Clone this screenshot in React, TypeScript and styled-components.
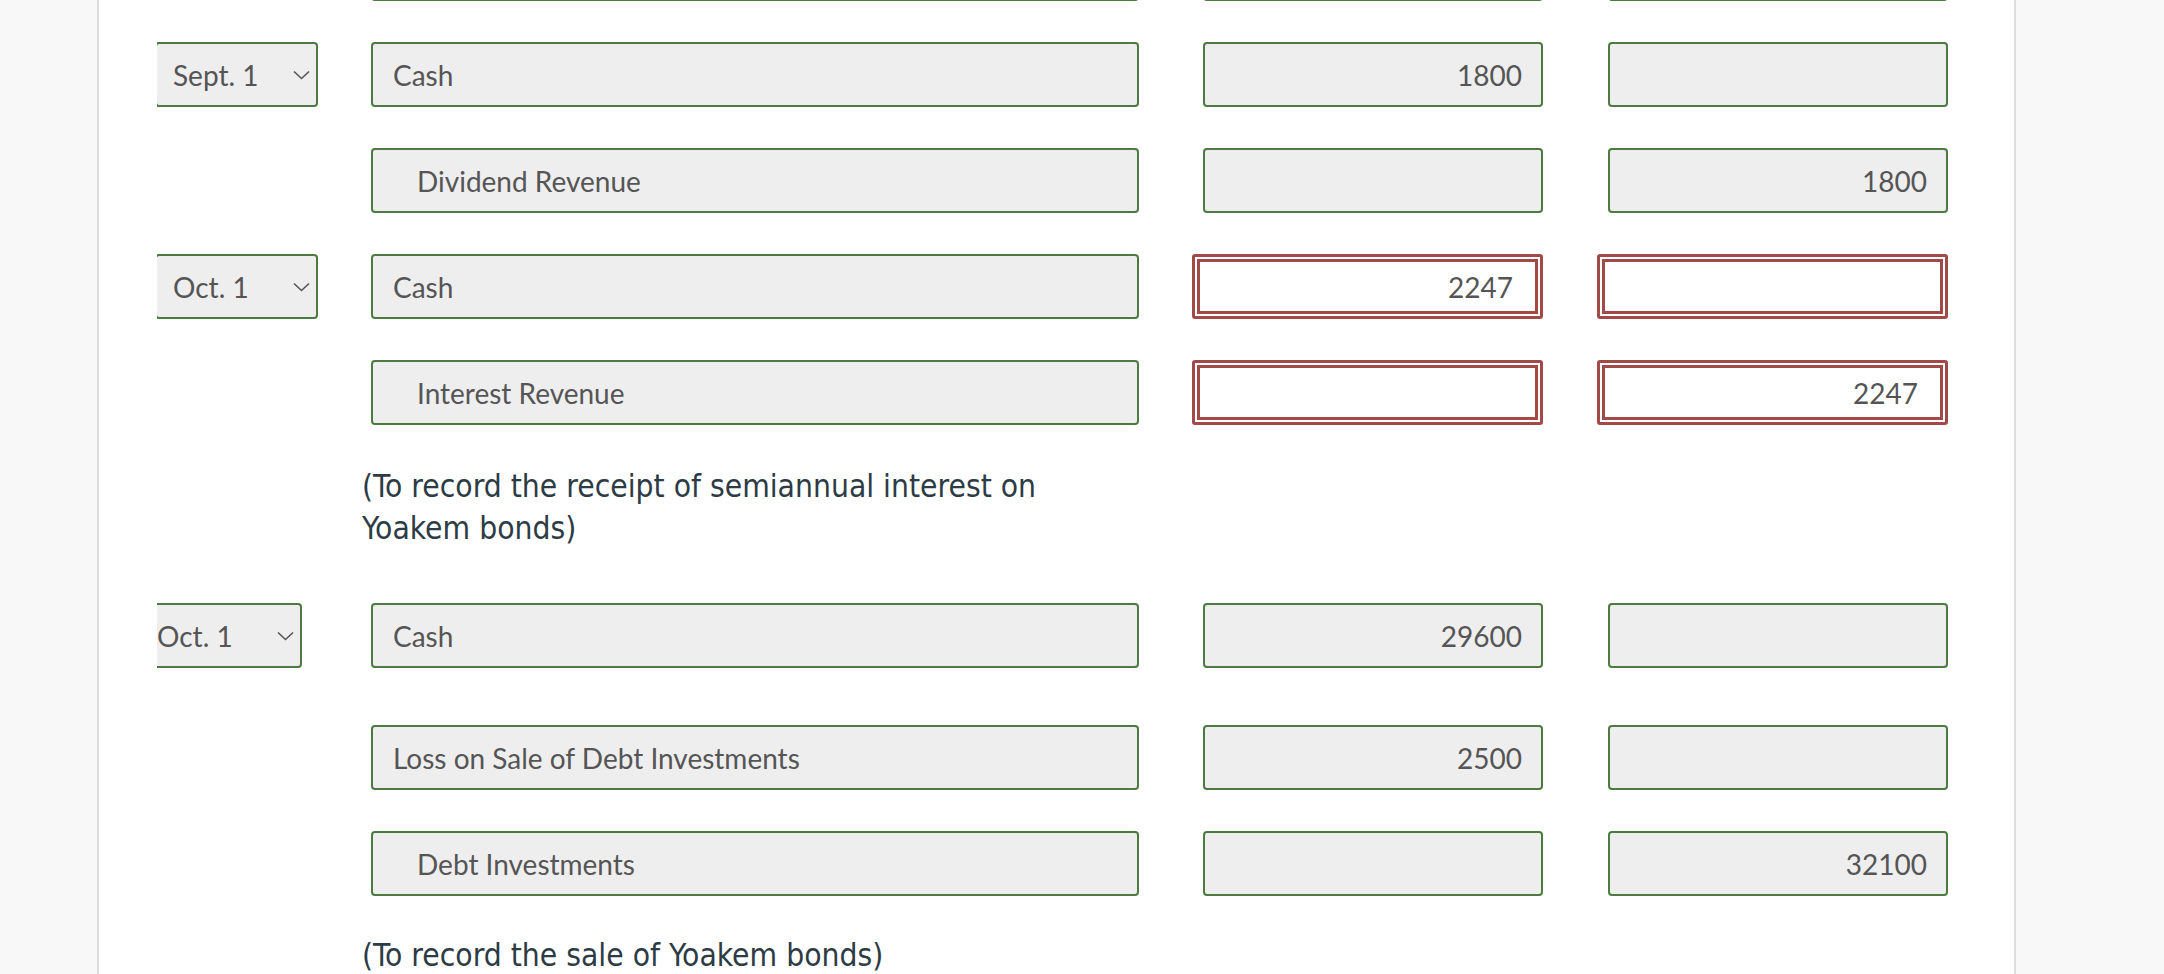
import React from "react";
import styled, { createGlobalStyle } from "styled-components";

const GlobalStyle = createGlobalStyle`
	html, body {
		margin: 0;
		padding: 0;
		background: #f8f8f8;
	}
	body {
		overflow: hidden;
	}
`;

const Page = styled.div`
	display: flex;
	height: 974px;
	overflow: hidden;
	background: #f8f8f8;
`;

const Gutter = styled.div`
	width: 97px;
	flex: none;
`;

const Sheet = styled.main`
	box-sizing: border-box;
	width: 1919px;
	flex: none;
	background: #ffffff;
	border-left: 2px solid #dcdcdc;
	border-right: 2px solid #dcdcdc;
	padding-left: 58px;
	overflow: hidden;
`;

const Entries = styled.div`
	margin-top: -64px;
`;

const Row = styled.div<{ $gap?: number }>`
	display: grid;
	grid-template-columns: 214px 768px 404px 405px;
	height: 65px;
	margin-bottom: ${(p) => (p.$gap ?? 41)}px;
`;

const DateClip = styled.div`
	width: 161px;
	height: 65px;
	overflow: hidden;
`;

const DateSelect = styled.div<{ $shift: number }>`
	box-sizing: border-box;
	display: flex;
	align-items: center;
	justify-content: space-between;
	width: 163px;
	height: 65px;
	margin-left: ${(p) => -p.$shift}px;
	padding: 0 6px 0 16px;
	background: #eeeeee;
	border: 2px solid #4b7b3f;
	border-radius: 4px;
	font-family: Lato, "Liberation Sans", sans-serif;
	font-size: 28px;
	color: #555555;

	svg {
		flex: none;
	}
`;

const Field = styled.input<{ $indent?: boolean; $amount?: boolean; $wrong?: boolean }>`
	box-sizing: border-box;
	display: block;
	height: 65px;
	width: ${(p) => (p.$amount ? (p.$wrong ? "351px" : "340px") : "100%")};
	justify-self: end;
	margin: 0;
	padding: 0 ${(p) => (p.$wrong ? "27px" : "19px")} 0 ${(p) => (p.$indent ? "44px" : "20px")};
	font-family: Lato, "Liberation Sans", sans-serif;
	font-size: 28px;
	color: #555555;
	text-align: ${(p) => (p.$amount ? "right" : "left")};
	background: ${(p) => (p.$wrong ? "#ffffff" : "#eeeeee")};
	border: 2px solid #4b7b3f;
	border-radius: 4px;
	outline: none;

	${(p) =>
		p.$wrong &&
		`
		border: 3px solid #a24a47;
		border-radius: 3px;
		box-shadow: inset 0 0 0 2px #ffffff, inset 0 0 0 5px #a24a47;
	`}
`;

const Note = styled.p<{ $top: number; $bottom: number }>`
	margin: ${(p) => p.$top}px 0 ${(p) => p.$bottom}px 205px;
	max-width: 740px;
	font-family: "DejaVu Sans Condensed", "DejaVu Sans", sans-serif;
	font-stretch: condensed;
	font-size: 31.5px;
	line-height: 42px;
	color: #2d3b45;
`;

const Chevron = () => (
	<svg width="17" height="10" viewBox="0 0 17 10">
		<polyline points="1,1.5 8.5,8.5 16,1.5" fill="none" stroke="#555555" strokeWidth="1.6" />
	</svg>
);

type Line = {
	date?: string;
	shift?: number;
	account: string;
	indent?: boolean;
	debit?: string;
	credit?: string;
	wrong?: boolean;
	gap?: number;
};

const JournalRow = ({ line }: { line: Line }) => (
	<Row $gap={line.gap}>
		<div>
			{line.date && (
				<DateClip>
					<DateSelect $shift={line.shift ?? 2}>
						<span>{line.date}</span>
						<Chevron />
					</DateSelect>
				</DateClip>
			)}
		</div>
		<Field readOnly value={line.account} $indent={line.indent} />
		<Field readOnly value={line.debit ?? ""} $amount $wrong={line.wrong} />
		<Field readOnly value={line.credit ?? ""} $amount $wrong={line.wrong} />
	</Row>
);

const first: Line[] = [
	{ account: "", indent: true },
	{ date: "Sept. 1", account: "Cash", debit: "1800" },
	{ account: "Dividend Revenue", indent: true, credit: "1800" },
	{ date: "Oct. 1", account: "Cash", debit: "2247", wrong: true },
	{ account: "Interest Revenue", indent: true, credit: "2247", wrong: true, gap: 0 },
];

const second: Line[] = [
	{ date: "Oct. 1", shift: 18, account: "Cash", debit: "29600", gap: 57 },
	{ account: "Loss on Sale of Debt Investments", debit: "2500" },
	{ account: "Debt Investments", indent: true, credit: "32100", gap: 0 },
];

export default function App() {
	return (
		<Page>
			<GlobalStyle />
			<Gutter />
			<Sheet>
				<Entries>
					{first.map((l, i) => (
						<JournalRow key={"a" + i} line={l} />
					))}
					<Note $top={40} $bottom={54}>
						(To record the receipt of semiannual interest on Yoakem bonds)
					</Note>
					{second.map((l, i) => (
						<JournalRow key={"b" + i} line={l} />
					))}
					<Note $top={38} $bottom={0}>
						(To record the sale of Yoakem bonds)
					</Note>
				</Entries>
			</Sheet>
		</Page>
	);
}
